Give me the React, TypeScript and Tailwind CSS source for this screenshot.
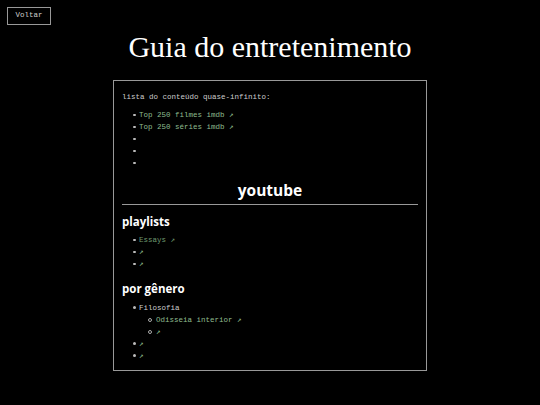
import React from 'react';

const mono = { fontFamily: '"Liberation Mono", "DejaVu Sans Mono", monospace' };
const sans = { fontFamily: '"Open Sans", sans-serif' };

function Link({ children, dim }: { children?: React.ReactNode; dim?: boolean }) {
  return (
    <a className={dim ? 'text-[#6f9a6f]' : 'text-[#8fbc8f]'}>
      {children}
      {children ? ' ' : ''}↗
    </a>
  );
}

function Item({ children, circle }: { children?: React.ReactNode; circle?: boolean }) {
  return (
    <li className="flex items-start">
      <span className="h-[12px] flex items-center shrink-0">
        {circle ? (
          <span className="block w-[4px] h-[4px] rounded-full border border-[#aaa]" />
        ) : (
          <span className="block w-[2.5px] h-[2.5px] rounded-full bg-[#bbb]" />
        )}
      </span>
      <div className={circle ? 'ml-[4px]' : 'ml-[3.5px]'}>{children}</div>
    </li>
  );
}

function App() {
  return (
    <div className="min-h-screen w-full bg-black text-[#cccccc]" style={mono}>
      <div className="flex pt-[7px] pl-[7px]">
        <button className="flex items-center justify-center border border-[#999] text-[7.5px] leading-none text-[#ccc] h-[18px] w-[44px] bg-black">
          Voltar
        </button>
      </div>
      <h1
        className="text-center text-white text-[30px] leading-none mt-[7px]"
        style={{ fontFamily: '"Liberation Serif", serif' }}
      >
        Guia do entretenimento
      </h1>
      <div className="mx-auto mt-[18px] w-[314px] border border-[#999] px-[8px] pt-[10px] pb-[8px] text-[7.5px] leading-[12px]">
        <p>lista do conteúdo quase-infinito:</p>
        <ul className="pl-[11px] mt-[6px]">
          <Item><Link>Top 250 filmes imdb</Link></Item>
          <Item><Link>Top 250 séries imdb</Link></Item>
          <Item />
          <Item />
          <Item />
        </ul>
        <h2
          className="text-center text-white text-[15.5px] font-bold leading-none mt-[14px] pb-[5px] border-b border-[#999]"
          style={sans}
        >
          youtube
        </h2>
        <h3 className="text-white text-[11.5px] font-bold leading-none mt-[11px]" style={sans}>
          playlists
        </h3>
        <ul className="pl-[11px] mt-[7px]">
          <Item><Link dim>Essays</Link></Item>
          <Item><Link /></Item>
          <Item><Link /></Item>
        </ul>
        <h3 className="text-white text-[11.5px] font-bold leading-none mt-[13px]" style={sans}>
          por gênero
        </h3>
        <ul className="pl-[11px] mt-[7px]">
          <Item>
            Filosofia
            <ul className="pl-[9px]">
              <Item circle><Link>Odisseia interior</Link></Item>
              <Item circle><Link /></Item>
            </ul>
          </Item>
          <Item><Link /></Item>
          <Item><Link /></Item>
        </ul>
      </div>
    </div>
  );
}

export default App;
